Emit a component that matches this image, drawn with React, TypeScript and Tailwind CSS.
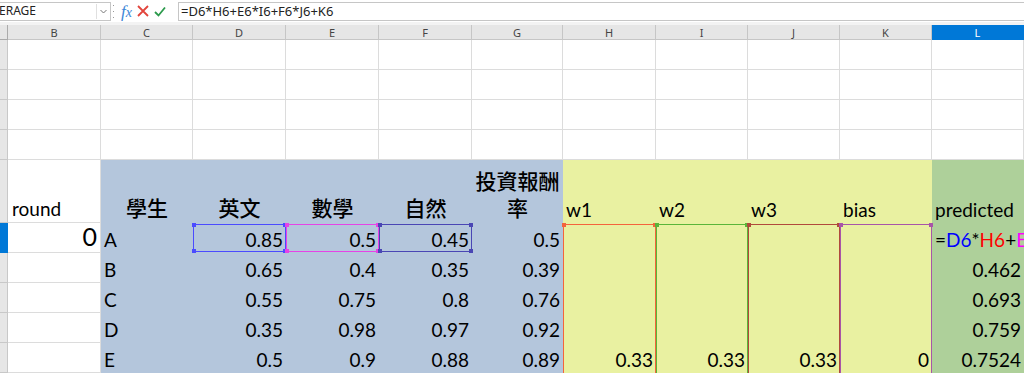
import React from "react";

const BLUE = "bg-[#b4c6dc]";
const YELLOW = "bg-[#e9f1a1]";
const GREEN = "bg-[#aed09a]";
const GRID = "border-r border-b border-[#dcdcdc] bg-white";
const ROWHEAD = "bg-[#e6e6e6] border-r border-b border-[#c8c8c8]";
const CJK = "font-['Noto_Sans_CJK_TC',sans-serif] font-medium text-[21px] leading-[27px]";

type Align = "l" | "r" | "c";

// range outline colours (formula edit mode)
const RANGES: Record<string, { b: string; h: string }> = {
  D: { b: "border-[#4b4bff]", h: "bg-[#4b4bff]" },
  E: { b: "border-[#e643e6]", h: "bg-[#e643e6]" },
  F: { b: "border-[#4a46b4]", h: "bg-[#4a46b4]" },
  H: { b: "border-[#f4643c]", h: "bg-[#f4643c]" },
  I: { b: "border-[#5ab53a]", h: "bg-[#5ab53a]" },
  J: { b: "border-[#b04a3c]", h: "bg-[#b04a3c]" },
  K: { b: "border-[#a855a8]", h: "bg-[#a855a8]" },
};

const Range: React.FC<{ col: string; top?: boolean; bottom?: boolean }> = ({
  col,
  top,
  bottom,
}) => {
  const c = RANGES[col];
  return (
    <div
      className={`pointer-events-none absolute inset-x-0 ${top ? "top-px border-t" : "top-0"} ${
        bottom ? "bottom-px border-b" : "bottom-0"
      } z-10 border-l border-r ${c.b}`}
    >
      {top && (
        <>
          <span className={`absolute -left-[2px] -top-[2px] h-[4px] w-[4px] ${c.h}`} />
          <span className={`absolute -right-[2px] -top-[2px] h-[4px] w-[4px] ${c.h}`} />
        </>
      )}
      {bottom && (
        <>
          <span className={`absolute -bottom-[2px] -left-[2px] h-[4px] w-[4px] ${c.h}`} />
          <span className={`absolute -bottom-[2px] -right-[2px] h-[4px] w-[4px] ${c.h}`} />
        </>
      )}
    </div>
  );
};

const Cell: React.FC<{
  className?: string;
  align?: Align;
  children?: React.ReactNode;
  overlay?: React.ReactNode;
}> = ({ className = "", align = "r", children, overlay }) => {
  const justify =
    align === "l" ? "justify-start" : align === "c" ? "justify-center text-center" : "justify-end";
  return (
    <div className={`relative flex items-end whitespace-nowrap px-[3px] pb-[2px] ${justify} ${className}`}>
      {children}
      {overlay}
    </div>
  );
};

const letters = ["B", "C", "D", "E", "F", "G", "H", "I", "J", "K", "L"];

const data = [
  { s: "B", v: ["0.65", "0.4", "0.35", "0.39"], p: "0.462" },
  { s: "C", v: ["0.55", "0.75", "0.8", "0.76"], p: "0.693" },
  { s: "D", v: ["0.35", "0.98", "0.97", "0.92"], p: "0.759" },
  { s: "E", v: ["0.5", "0.9", "0.88", "0.89"], p: "0.7524", w: true },
];

export default function App() {
  return (
    <div className="h-[373px] w-[1024px] overflow-hidden bg-white font-['Lato','Noto_Sans_CJK_TC',sans-serif] text-[19px] leading-[23px] text-black">
      {/* formula bar */}
      <div className="flex h-[22px] items-center bg-white font-['Noto_Sans',sans-serif] text-[12px] text-[#222]">
        <div className="flex h-[19px] w-[111px] items-center justify-between border border-l-0 border-[#c6c6c6] bg-white pr-px">
          <span className="-ml-px leading-none">ERAGE</span>
          <div className="flex h-[15px] w-[13px] items-center justify-center border-l border-[#e0e0e0]">
            <svg width="7" height="5" viewBox="0 0 7 5">
              <path d="M0.5 1l3 3 3-3" fill="none" stroke="#777" strokeWidth="1" />
            </svg>
          </div>
        </div>
        <div className="ml-[2px] flex h-[13px] flex-col justify-between">
          <span className="h-px w-px bg-[#999]" />
          <span className="h-px w-px bg-[#999]" />
          <span className="h-px w-px bg-[#999]" />
        </div>
        <span className="ml-[7px] font-['Liberation_Serif',serif] text-[17px] italic leading-none text-[#3b86d6]">
          f<span className="text-[14px]">x</span>
        </span>
        <svg className="ml-[5px]" width="12" height="12" viewBox="0 0 12 12">
          <path d="M1 1l10 10M11 1L1 11" stroke="#e2453c" strokeWidth="1.8" />
        </svg>
        <svg className="ml-[5px]" width="12" height="11" viewBox="0 0 12 11">
          <path d="M1 6l3.5 3.5L11 1.5" fill="none" stroke="#2c9a4c" strokeWidth="1.8" />
        </svg>
        <div className="ml-[12px] flex h-[19px] flex-1 items-center border border-r-0 border-[#c6c6c6] pl-[2px] text-[13px] leading-none">
          =D6*H6+E6*I6+F6*J6+K6
        </div>
      </div>
      <div className="h-[3px] bg-[#f3f3f3]" />

      {/* sheet grid */}
      <div className="grid grid-cols-[8px_93px_92px_93px_93px_93px_91px_93px_92px_92px_92px_92px] grid-rows-[15px_30px_30px_30px_30px_63px_30px_30px_30px_30px_30px]">
        {/* column headers */}
        <div className="border-b border-r border-[#ababab] bg-[#e6e6e6]" />
        {letters.map((l) => (
          <div
            key={l}
            className={`flex items-center justify-center border-b border-r font-['Noto_Sans',sans-serif] text-[11px] leading-none ${
              l === "L"
                ? "border-[#0078d7] bg-[#0078d7] text-white"
                : "border-[#c6c6c6] bg-[#e6e6e6] text-[#444]"
            }`}
          >
            {l}
          </div>
        ))}

        {/* rows 1-4: empty */}
        {[1, 2, 3, 4].map((r) => (
          <React.Fragment key={r}>
            <div className={ROWHEAD} />
            {letters.map((l) => (
              <div key={l} className={GRID} />
            ))}
          </React.Fragment>
        ))}

        {/* row 5: titles */}
        <div className={ROWHEAD} />
        <Cell className={GRID} align="l">
          <span className="pl-px">round</span>
        </Cell>
        <Cell className={BLUE} align="c">
          <span className={CJK}>學生</span>
        </Cell>
        <Cell className={BLUE} align="c">
          <span className={CJK}>英文</span>
        </Cell>
        <Cell className={BLUE} align="c">
          <span className={CJK}>數學</span>
        </Cell>
        <Cell className={BLUE} align="c">
          <span className={CJK}>自然</span>
        </Cell>
        <Cell className={`${BLUE} px-0`} align="c">
          <span className={CJK}>
            投資報酬
            <br />率
          </span>
        </Cell>
        <Cell className={YELLOW} align="l">w1</Cell>
        <Cell className={YELLOW} align="l">w2</Cell>
        <Cell className={YELLOW} align="l">w3</Cell>
        <Cell className={YELLOW} align="l">bias</Cell>
        <Cell className={GREEN} align="l">predicted</Cell>

        {/* row 6: A, formula being edited */}
        <div className="border-b border-r border-[#0078d7] bg-[#0078d7]" />
        <Cell className={GRID}>
          <span className="text-[25px] leading-[28px]">0</span>
        </Cell>
        <Cell className={BLUE} align="l">A</Cell>
        <Cell className={BLUE} overlay={<Range col="D" top bottom />}>0.85</Cell>
        <Cell className={BLUE} overlay={<Range col="E" top bottom />}>0.5</Cell>
        <Cell className={BLUE} overlay={<Range col="F" top bottom />}>0.45</Cell>
        <Cell className={BLUE}>0.5</Cell>
        <Cell className={YELLOW} overlay={<Range col="H" top />} />
        <Cell className={YELLOW} overlay={<Range col="I" top />} />
        <Cell className={YELLOW} overlay={<Range col="J" top />} />
        <Cell className={YELLOW} overlay={<Range col="K" top />} />
        <Cell className={`${GREEN} overflow-visible`} align="l">
          <span>
            =<span className="text-[#0000ff]">D6</span>*<span className="text-[#ff0000]">H6</span>+
            <span className="text-[#ff00ff]">E6</span>*<span className="text-[#008000]">I6</span>+
            <span className="text-[#800000]">F6</span>*J6+K6
          </span>
        </Cell>

        {/* rows 7-10 */}
        {data.map((row) => (
          <React.Fragment key={row.s}>
            <div className={ROWHEAD} />
            <div className={GRID} />
            <Cell className={BLUE} align="l">{row.s}</Cell>
            {row.v.map((v, i) => (
              <Cell key={i} className={BLUE}>
                {v}
              </Cell>
            ))}
            <Cell className={YELLOW} overlay={<Range col="H" />}>{row.w ? "0.33" : null}</Cell>
            <Cell className={YELLOW} overlay={<Range col="I" />}>{row.w ? "0.33" : null}</Cell>
            <Cell className={YELLOW} overlay={<Range col="J" />}>{row.w ? "0.33" : null}</Cell>
            <Cell className={YELLOW} overlay={<Range col="K" />}>{row.w ? "0" : null}</Cell>
            <Cell className={GREEN}>{row.p}</Cell>
          </React.Fragment>
        ))}
      </div>
    </div>
  );
}
